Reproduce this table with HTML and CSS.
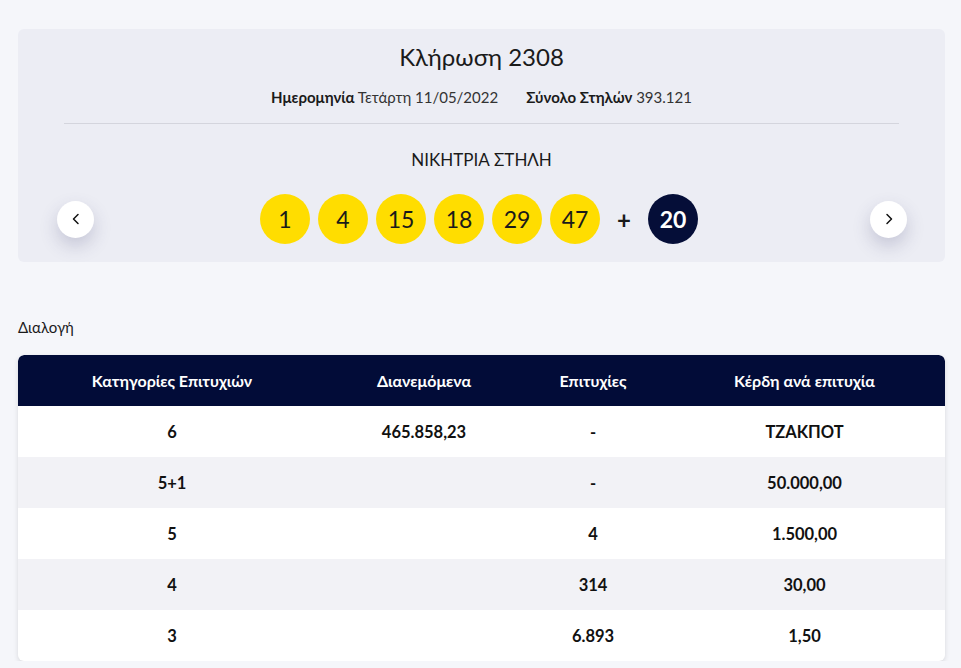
FILE: index.html
```html
<!DOCTYPE html>
<html lang="el">
<head>
<meta charset="utf-8">
<title>Κλήρωση 2308</title>
<link rel="stylesheet" href="styles.css">
</head>
<body>
<div class="page">
  <section class="draw-card">
    <h1 class="draw-title">Κλήρωση 2308</h1>
    <div class="draw-info">
      <span><b>Ημερομηνία</b> Τετάρτη 11/05/2022</span>
      <span><b>Σύνολο Στηλών</b> 393.121</span>
    </div>
    <hr class="divider">
    <div class="win-label">ΝΙΚΗΤΡΙΑ ΣΤΗΛΗ</div>
    <div class="balls-row">
      <button class="nav-btn" aria-label="previous">
        <svg width="14" height="14" viewBox="0 0 14 14"><path d="M9 2.5 4.5 7 9 11.5" fill="none" stroke="#111" stroke-width="1.5" stroke-linecap="round" stroke-linejoin="round"/></svg>
      </button>
      <div class="balls">
        <span class="ball">1</span>
        <span class="ball">4</span>
        <span class="ball">15</span>
        <span class="ball">18</span>
        <span class="ball">29</span>
        <span class="ball">47</span>
        <span class="plus">+</span>
        <span class="ball joker">20</span>
      </div>
      <button class="nav-btn" aria-label="next">
        <svg width="14" height="14" viewBox="0 0 14 14"><path d="M5 2.5 9.5 7 5 11.5" fill="none" stroke="#111" stroke-width="1.5" stroke-linecap="round" stroke-linejoin="round"/></svg>
      </button>
    </div>
  </section>

  <div class="section-label">Διαλογή</div>

  <table class="results">
    <colgroup>
      <col class="c1"><col class="c2"><col class="c3"><col class="c4">
    </colgroup>
    <thead>
      <tr><th>Κατηγορίες Επιτυχιών</th><th>Διανεμόμενα</th><th>Επιτυχίες</th><th>Κέρδη ανά επιτυχία</th></tr>
    </thead>
    <tbody>
      <tr><td>6</td><td>465.858,23</td><td>-</td><td>ΤΖΑΚΠΟΤ</td></tr>
      <tr><td>5+1</td><td></td><td>-</td><td>50.000,00</td></tr>
      <tr><td>5</td><td></td><td>4</td><td>1.500,00</td></tr>
      <tr><td>4</td><td></td><td>314</td><td>30,00</td></tr>
      <tr><td>3</td><td></td><td>6.893</td><td>1,50</td></tr>
    </tbody>
  </table>
</div>
</body>
</html>
```

FILE: styles.css
```css
* { box-sizing: border-box; }
html, body { margin: 0; padding: 0; }
body {
  background: #f5f6fa;
  font-family: "Lato", "Noto Sans", sans-serif;
  color: #1a1a1a;
  overflow: hidden;
}
.page {
  padding: 29px 16px 0 18px;
}
.draw-card {
  background: #ecedf4;
  border-radius: 6px;
  height: 233px;
  padding-top: 12px;
  text-align: center;
}
.draw-title {
  margin: 0;
  font-size: 24px;
  font-weight: 400;
  line-height: 32px;
  color: #1a1a1a;
}
.draw-info {
  margin-top: 14px;
  font-size: 15px;
  line-height: 20px;
  display: flex;
  justify-content: center;
  gap: 28px;
  color: #333;
}
.draw-info b { font-weight: 700; color: #1a1a1a; }
.divider {
  border: 0;
  border-top: 1px solid #d4d5dd;
  margin: 16px 46px 0 46px;
}
.win-label {
  margin-top: 25px;
  font-size: 17px;
  line-height: 22px;
  color: #1a1a1a;
}
.balls-row {
  margin-top: 23px;
  display: flex;
  align-items: center;
  justify-content: space-between;
  padding: 0 38px 0 39px;
}
.nav-btn {
  width: 37px;
  height: 37px;
  border-radius: 50%;
  border: 0;
  background: #fff;
  box-shadow: 0 8px 18px rgba(60, 60, 110, 0.22);
  display: flex;
  align-items: center;
  justify-content: center;
  padding: 0;
}
.balls {
  display: flex;
  align-items: center;
  gap: 8px;
  margin-left: -6px;
}
.ball {
  width: 50px;
  height: 50px;
  border-radius: 50%;
  background: #ffdd00;
  display: flex;
  align-items: center;
  justify-content: center;
  font-size: 23px;
  color: #1a1a1a;
}
.ball.joker {
  background: #050e38;
  color: #fff;
  font-weight: 700;
}
.plus {
  font-size: 24px;
  font-weight: 700;
  width: 32px;
  text-align: center;
}
.section-label {
  margin-top: 55px;
  font-size: 15px;
  line-height: 20px;
  color: #1a1a1a;
}
.results {
  margin-top: 18px;
  width: 927px;
  border-collapse: separate;
  border-spacing: 0;
  table-layout: fixed;
  background: #fff;
  border-radius: 6px;
  box-shadow: 0 2px 5px rgba(0, 0, 0, 0.12);
  overflow: hidden;
}
.c1 { width: 308px; }
.c2 { width: 196px; }
.c3 { width: 142px; }
.c4 { width: 281px; }
.results th {
  background: #020c38;
  color: #fff;
  font-size: 16px;
  font-weight: 700;
  height: 51px;
  text-align: center;
}
.results th:first-child { border-top-left-radius: 6px; }
.results th:last-child { border-top-right-radius: 6px; }
.results td {
  height: 51px;
  text-align: center;
  font-size: 16.5px;
  font-weight: 700;
  color: #111;
}
.results tbody tr:nth-child(even) td { background: #f2f2f6; }
```
